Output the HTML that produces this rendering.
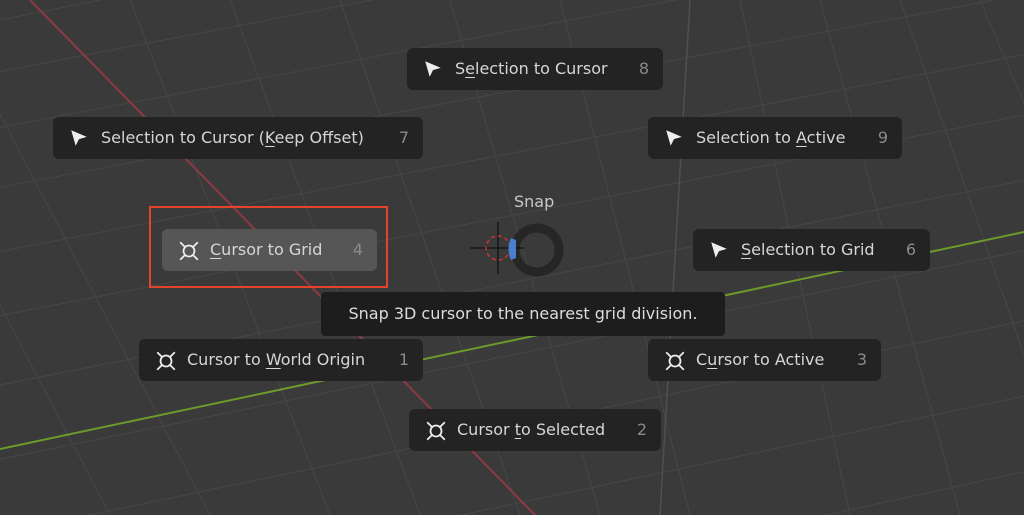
<!DOCTYPE html>
<html style="overflow:hidden"><head><meta charset="utf-8"><style>
html,body{margin:0;width:1024px;height:515px;overflow:hidden}
body{background:#3a3a3a;font-family:"DejaVu Sans","Liberation Sans",sans-serif;position:relative}
svg.bg{position:absolute;left:0;top:0}
.b{position:absolute;background:#232323;border-radius:6px;color:#d6d6d6;font-size:16px;height:42px;line-height:42px;box-sizing:border-box}
.b .t{position:absolute;left:48px;top:0}
.b .n{position:absolute;right:14px;top:0;color:#8a8a8a}
.b svg{position:absolute;left:16px;top:11px}
u{text-decoration:underline;text-underline-offset:3px}
</style></head><body>
<svg class="bg" width="1024" height="515">
<g stroke="#454545" stroke-width="1.2">
<line x1="-200" y1="60" x2="1100" y2="-200"/>
<line x1="-200" y1="110" x2="1100" y2="-140"/>
<line x1="-200" y1="165" x2="1100" y2="-80"/>
<line x1="-200" y1="225" x2="1100" y2="-20"/>
<line x1="-200" y1="290" x2="1100" y2="40"/>
<line x1="-200" y1="355" x2="1100" y2="100"/>
<line x1="-200" y1="425" x2="1100" y2="165"/>
<line x1="-200" y1="500" x2="1100" y2="235"/>
<line x1="-200" y1="575" x2="1100" y2="305"/>
<line x1="-200" y1="655" x2="1100" y2="380"/>
<line x1="-200" y1="740" x2="1100" y2="455"/>
<line x1="-200" y1="830" x2="1100" y2="535"/>
<line x1="-160" y1="0" x2="110" y2="515"/>
<line x1="-60" y1="0" x2="210" y2="515"/>
<line x1="130" y1="0" x2="330" y2="515"/>
<line x1="230" y1="0" x2="420" y2="515"/>
<line x1="340" y1="0" x2="520" y2="515"/>
<line x1="450" y1="0" x2="600" y2="515"/>
<line x1="560" y1="0" x2="690" y2="515"/>
<line x1="740" y1="0" x2="850" y2="515"/>
<line x1="820" y1="0" x2="960" y2="515"/>
<line x1="900" y1="0" x2="1080" y2="515"/>
<line x1="980" y1="0" x2="1200" y2="515"/>
</g>
<line x1="690" y1="0" x2="660" y2="515" stroke="#505050" stroke-width="1.5"/>
<line x1="30" y1="0" x2="535" y2="515" stroke="#8e3a42" stroke-width="2"/>
<line x1="0" y1="449" x2="1024" y2="232" stroke="#6d9a2a" stroke-width="2"/>
</svg>

<div class="b" style="left:407px;top:48px;width:256px"><svg width="20" height="20" viewBox="0 0 18 18"><path d="M2 2 L16 8 L9 10 L6 16 Z" fill="#eee"/></svg><span class="t">S<u>e</u>lection to Cursor</span><span class="n">8</span></div>
<div class="b" style="left:53px;top:117px;width:370px"><svg width="20" height="20" viewBox="0 0 18 18"><path d="M2 2 L16 8 L9 10 L6 16 Z" fill="#eee"/></svg><span class="t">Selection to Cursor (<u>K</u>eep Offset)</span><span class="n">7</span></div>
<div class="b" style="left:648px;top:117px;width:254px"><svg width="20" height="20" viewBox="0 0 18 18"><path d="M2 2 L16 8 L9 10 L6 16 Z" fill="#eee"/></svg><span class="t">Selection to <u>A</u>ctive</span><span class="n">9</span></div>
<div class="b" style="left:693px;top:229px;width:237px"><svg width="20" height="20" viewBox="0 0 18 18"><path d="M2 2 L16 8 L9 10 L6 16 Z" fill="#eee"/></svg><span class="t"><u>S</u>election to Grid</span><span class="n">6</span></div>

<div style="position:absolute;left:149px;top:206px;width:235px;height:78px;border:2px solid #e2452c"></div>
<div class="b" style="left:162px;top:229px;width:215px;background:#565656"><svg width="22" height="22" viewBox="0 0 20 20"><circle cx="10" cy="10" r="5" fill="none" stroke="#eee" stroke-width="1.6"/><path d="M2 2L6.5 6.5M18 2L13.5 6.5M2 18L6.5 13.5M18 18L13.5 13.5" stroke="#eee" stroke-width="1.6"/></svg><span class="t"><u>C</u>ursor to Grid</span><span class="n">4</span></div>

<div style="position:absolute;left:514px;top:192px;color:#c8c8c8;font-size:16px">Snap</div>
<svg style="position:absolute;left:470px;top:218px" width="100" height="64">
<circle cx="67" cy="32" r="22" fill="none" stroke="#262626" stroke-width="9"/>
<line x1="0" y1="30" x2="54" y2="30" stroke="#111" stroke-width="1.3"/>
<line x1="28" y1="4" x2="28" y2="56" stroke="#111" stroke-width="1.3"/>
<circle cx="28" cy="30" r="12" fill="none" stroke="#c33" stroke-width="1.5" stroke-dasharray="4 3"/>
<path d="M41 20 L46 22 L46 40 L41 42 Q36 31 41 20Z" fill="#4a7fd0"/>
</svg>

<div style="position:absolute;left:321px;top:292px;width:404px;height:44px;background:#1d1d1d;border-radius:4px;color:#dcdcdc;font-size:16px;line-height:44px;text-align:center">Snap 3D cursor to the nearest grid division.</div>

<div class="b" style="left:139px;top:339px;width:284px"><svg width="22" height="22" viewBox="0 0 20 20"><circle cx="10" cy="10" r="5" fill="none" stroke="#eee" stroke-width="1.6"/><path d="M2 2L6.5 6.5M18 2L13.5 6.5M2 18L6.5 13.5M18 18L13.5 13.5" stroke="#eee" stroke-width="1.6"/></svg><span class="t">Cursor to <u>W</u>orld Origin</span><span class="n">1</span></div>
<div class="b" style="left:648px;top:339px;width:233px"><svg width="22" height="22" viewBox="0 0 20 20"><circle cx="10" cy="10" r="5" fill="none" stroke="#eee" stroke-width="1.6"/><path d="M2 2L6.5 6.5M18 2L13.5 6.5M2 18L6.5 13.5M18 18L13.5 13.5" stroke="#eee" stroke-width="1.6"/></svg><span class="t">C<u>u</u>rsor to Active</span><span class="n">3</span></div>
<div class="b" style="left:409px;top:409px;width:252px"><svg width="22" height="22" viewBox="0 0 20 20"><circle cx="10" cy="10" r="5" fill="none" stroke="#eee" stroke-width="1.6"/><path d="M2 2L6.5 6.5M18 2L13.5 6.5M2 18L6.5 13.5M18 18L13.5 13.5" stroke="#eee" stroke-width="1.6"/></svg><span class="t">Cursor <u>t</u>o Selected</span><span class="n">2</span></div>
</body></html>
